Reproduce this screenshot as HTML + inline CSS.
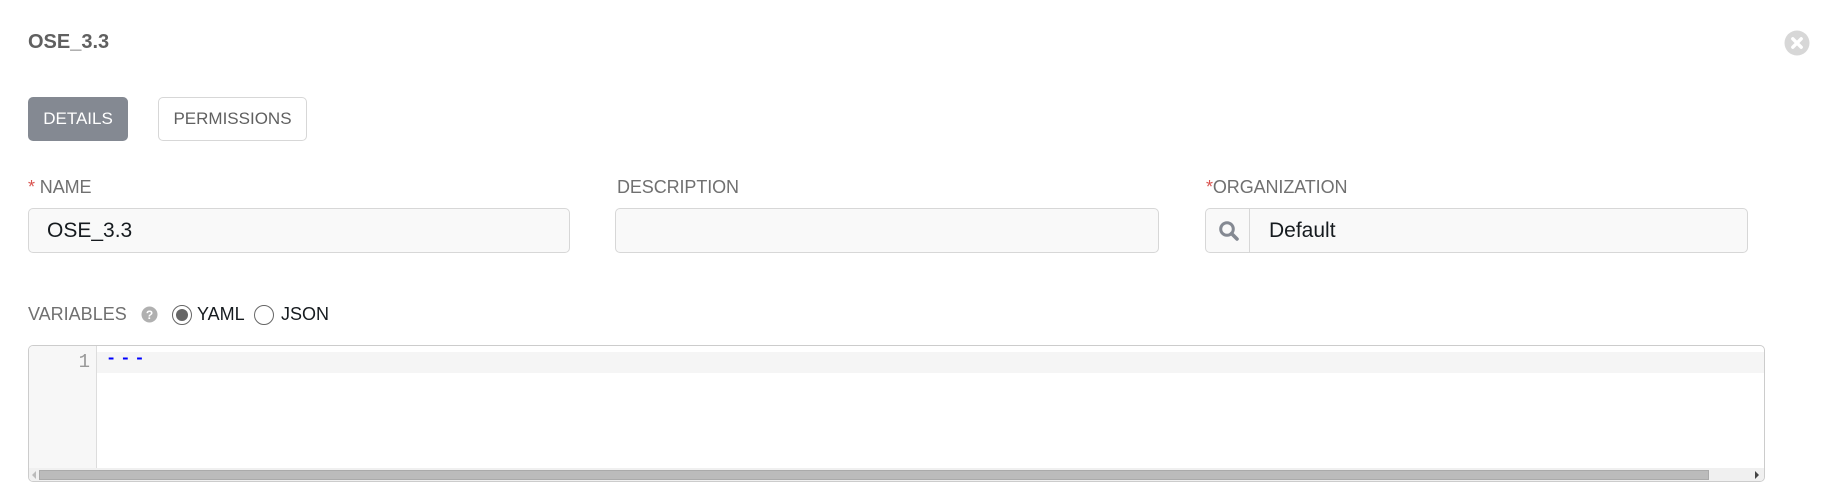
<!DOCTYPE html>
<html><head><meta charset="utf-8"><style>
*{box-sizing:border-box;margin:0;padding:0}
body{width:1832px;height:498px;background:#fff;font-family:"Liberation Sans",sans-serif;position:relative;overflow:hidden;color:#707070}
.a{position:absolute}
.title{left:28px;top:31px;font-size:20px;font-weight:bold;color:#606060}
.btn{top:97px;height:44px;border-radius:5px;font-size:17px;line-height:42px;text-align:center}
.lbl{top:177px;font-size:18px;color:#707070;letter-spacing:-0.1px}
.star{color:#d9534f}
.inp{top:208px;height:45px;border:1px solid #d7d7d7;border-radius:5px;background:#f9f9f9;font-size:21px;color:#161b1f;line-height:43px}
</style></head><body>
<div class="a title">OSE_3.3</div>
<svg class="a" style="left:1784px;top:30px" width="26" height="26" viewBox="0 0 26 26"><circle cx="13" cy="13" r="12.5" fill="#d7d7d7"/><path d="M8.8 8.8L17.2 17.2M17.2 8.8L8.8 17.2" stroke="#fff" stroke-width="3.4" stroke-linecap="round"/></svg>

<div class="a btn" style="left:28px;width:100px;background:#848992;color:#fff;border:1px solid #848992">DETAILS</div>
<div class="a btn" style="left:158px;width:149px;border:1px solid #d7d7d7;color:#606060">PERMISSIONS</div>

<div class="a lbl" style="left:28px"><span class="star">*</span>&nbsp;NAME</div>
<div class="a lbl" style="left:617px">DESCRIPTION</div>
<div class="a lbl" style="left:1206px"><span class="star">*</span>ORGANIZATION</div>

<div class="a inp" style="left:28px;width:542px;padding-left:18px">OSE_3.3</div>
<div class="a inp" style="left:615px;width:544px"></div>
<div class="a inp" style="left:1205px;width:543px">
 <div class="a" style="left:0;top:0;width:44px;height:43px;border-right:1px solid #d7d7d7"></div>
 <svg class="a" style="left:12px;top:11px" width="22" height="22" viewBox="0 0 22 22"><circle cx="9" cy="9" r="6.3" fill="none" stroke="#848992" stroke-width="3"/><path d="M13.5 13.5L19 19" stroke="#848992" stroke-width="3.6" stroke-linecap="round"/></svg>
 <div class="a" style="left:63px;top:0">Default</div>
</div>

<div class="a" style="left:28px;top:304px;font-size:18px">VARIABLES</div>
<svg class="a" style="left:141px;top:306px" width="17" height="17" viewBox="0 0 17 17"><circle cx="8.5" cy="8.5" r="8" fill="#b0b0b0"/><text x="8.5" y="13" font-size="12" font-weight="bold" text-anchor="middle" fill="#fff" font-family="Liberation Sans">?</text></svg>
<svg class="a" style="left:171px;top:304px" width="22" height="22"><circle cx="11" cy="11" r="9.5" fill="#fff" stroke="#666" stroke-width="1"/><circle cx="11" cy="11" r="6" fill="#666"/></svg>
<div class="a" style="left:197px;top:304px;font-size:18px;color:#161b1f">YAML</div>
<svg class="a" style="left:253px;top:304px" width="22" height="22"><circle cx="11" cy="11" r="9.5" fill="#fff" stroke="#666" stroke-width="1"/></svg>
<div class="a" style="left:281px;top:304px;font-size:18px;color:#161b1f">JSON</div>

<div class="a" style="left:28px;top:345px;width:1737px;height:137px;border:1px solid #ccc;border-radius:5px;overflow:hidden;background:#fff">
 <div class="a" style="left:0;top:0;width:68px;height:135px;background:#f7f7f7;border-right:1px solid #ddd"></div>
 <div class="a" style="left:68px;top:6px;right:0;height:21px;background:#f5f5f5"></div>
 <div class="a" style="left:0;top:5px;width:61px;text-align:right;font-family:'Liberation Mono',monospace;font-size:19px;color:#999">1</div>
 <div class="a" style="left:77px;top:4px;font-family:'Liberation Mono',monospace;font-size:17px;font-weight:bold;color:#00f;letter-spacing:4px">---</div>
 <div class="a" style="left:0;top:122px;right:0;height:13px;background:#f0f0f0"></div>
 <div class="a" style="left:10px;top:124px;width:1670px;height:10px;background:#bbb;border:1px solid #aaa"></div>
 <div class="a" style="left:3px;top:125px;width:0;height:0;border-top:4px solid transparent;border-bottom:4px solid transparent;border-right:4px solid #bbb"></div>
 <div class="a" style="right:5px;top:125px;width:0;height:0;border-top:4px solid transparent;border-bottom:4px solid transparent;border-left:4px solid #444"></div>
</div>
</body></html>
